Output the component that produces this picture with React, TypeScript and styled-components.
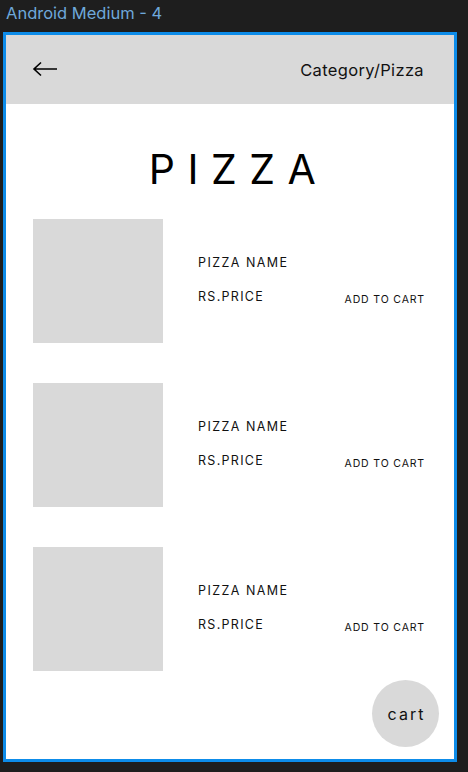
import React from "react";
import styled, { createGlobalStyle } from "styled-components";

const Global = createGlobalStyle`
  html, body { margin: 0; padding: 0; background: #1e1e1e; }
  body { font-family: Inter, "Noto Sans", sans-serif; }
  * { box-sizing: border-box; }
`;

const Page = styled.div`
  width: 468px;
  height: 772px;
  background: #1e1e1e;
  display: flex;
  flex-direction: column;
`;

const FrameLabel = styled.div`
  height: 32px;
  padding: 3px 0 0 6px;
  font-family: Inter, sans-serif;
  font-size: 16.5px;
  line-height: 20px;
  color: #6ea8da;
`;

const Frame = styled.div`
  position: relative;
  margin-left: 3px;
  width: 454px;
  height: 730px;
  border: 3px solid #0d8ce9;
  background: #ffffff;
  display: flex;
  flex-direction: column;
`;

const Header = styled.header`
  height: 69px;
  flex-shrink: 0;
  background: #d9d9d9;
  display: flex;
  align-items: center;
  justify-content: space-between;
  padding: 0 30px 0 26px;
`;

const BackButton = styled.div`
  width: 26px;
  height: 16px;
  display: flex;
  align-items: center;
  margin-top: -1px;
`;

const Crumb = styled.div`
  font-family: Inter, sans-serif;
  font-size: 16.5px;
  letter-spacing: 0.35px;
  color: #111;
  margin-top: 0px;
`;

const Title = styled.h1`
  margin: 40px 0 0 0;
  padding-left: 17px;
  text-align: center;
  font-family: Inter, sans-serif;
  font-weight: 400;
  font-size: 41px;
  line-height: 50px;
  letter-spacing: 12.5px;
  color: #000;
`;

const List = styled.div`
  margin-top: 25px;
  display: flex;
  flex-direction: column;
  gap: 40px;
  padding: 0 30px 0 27px;
`;

const Row = styled.div`
  display: flex;
  height: 124px;
`;

const Thumb = styled.div`
  width: 130px;
  height: 124px;
  background: #d9d9d9;
  flex-shrink: 0;
`;

const Info = styled.div`
  flex: 1;
  padding: 36px 0 0 35px;
  display: flex;
  flex-direction: column;
`;

const Name = styled.div`
  font-family: Inter, sans-serif;
  font-size: 12.5px;
  line-height: 16px;
  letter-spacing: 1.45px;
  color: #111;
`;

const PriceLine = styled.div`
  margin-top: 18px;
  display: flex;
  justify-content: space-between;
  align-items: flex-start;
`;

const Price = styled.div`
  font-family: Inter, sans-serif;
  font-size: 12.5px;
  line-height: 16px;
  letter-spacing: 1.3px;
  color: #111;
`;

const AddToCart = styled.div`
  margin-top: 4px;
  font-family: Inter, sans-serif;
  font-size: 10.5px;
  line-height: 14px;
  letter-spacing: 0.85px;
  margin-right: -1px;
  color: #111;
`;

const CartFab = styled.div`
  position: absolute;
  right: 15px;
  bottom: 12px;
  width: 67px;
  height: 67px;
  border-radius: 50%;
  background: #d9d9d9;
  display: flex;
  align-items: center;
  justify-content: center;
  font-family: Inter, sans-serif;
  font-size: 16px;
  letter-spacing: 2px;
  color: #111;
  padding-left: 2px;
`;

const items = [0, 1, 2];

export default function App() {
  return (
    <>
      <Global />
      <Page>
        <FrameLabel>Android Medium - 4</FrameLabel>
        <Frame>
          <Header>
            <BackButton>
              <svg width="26" height="16" viewBox="0 0 26 16" fill="none">
                <path d="M25 8H2M9 1.5L2 8l7 6.5" stroke="#000" strokeWidth="1.6" />
              </svg>
            </BackButton>
            <Crumb>Category/Pizza</Crumb>
          </Header>
          <Title>PIZZA</Title>
          <List>
            {items.map((i) => (
              <Row key={i}>
                <Thumb />
                <Info>
                  <Name>PIZZA NAME</Name>
                  <PriceLine>
                    <Price>RS.PRICE</Price>
                    <AddToCart>ADD TO CART</AddToCart>
                  </PriceLine>
                </Info>
              </Row>
            ))}
          </List>
          <CartFab>cart</CartFab>
        </Frame>
      </Page>
    </>
  );
}
